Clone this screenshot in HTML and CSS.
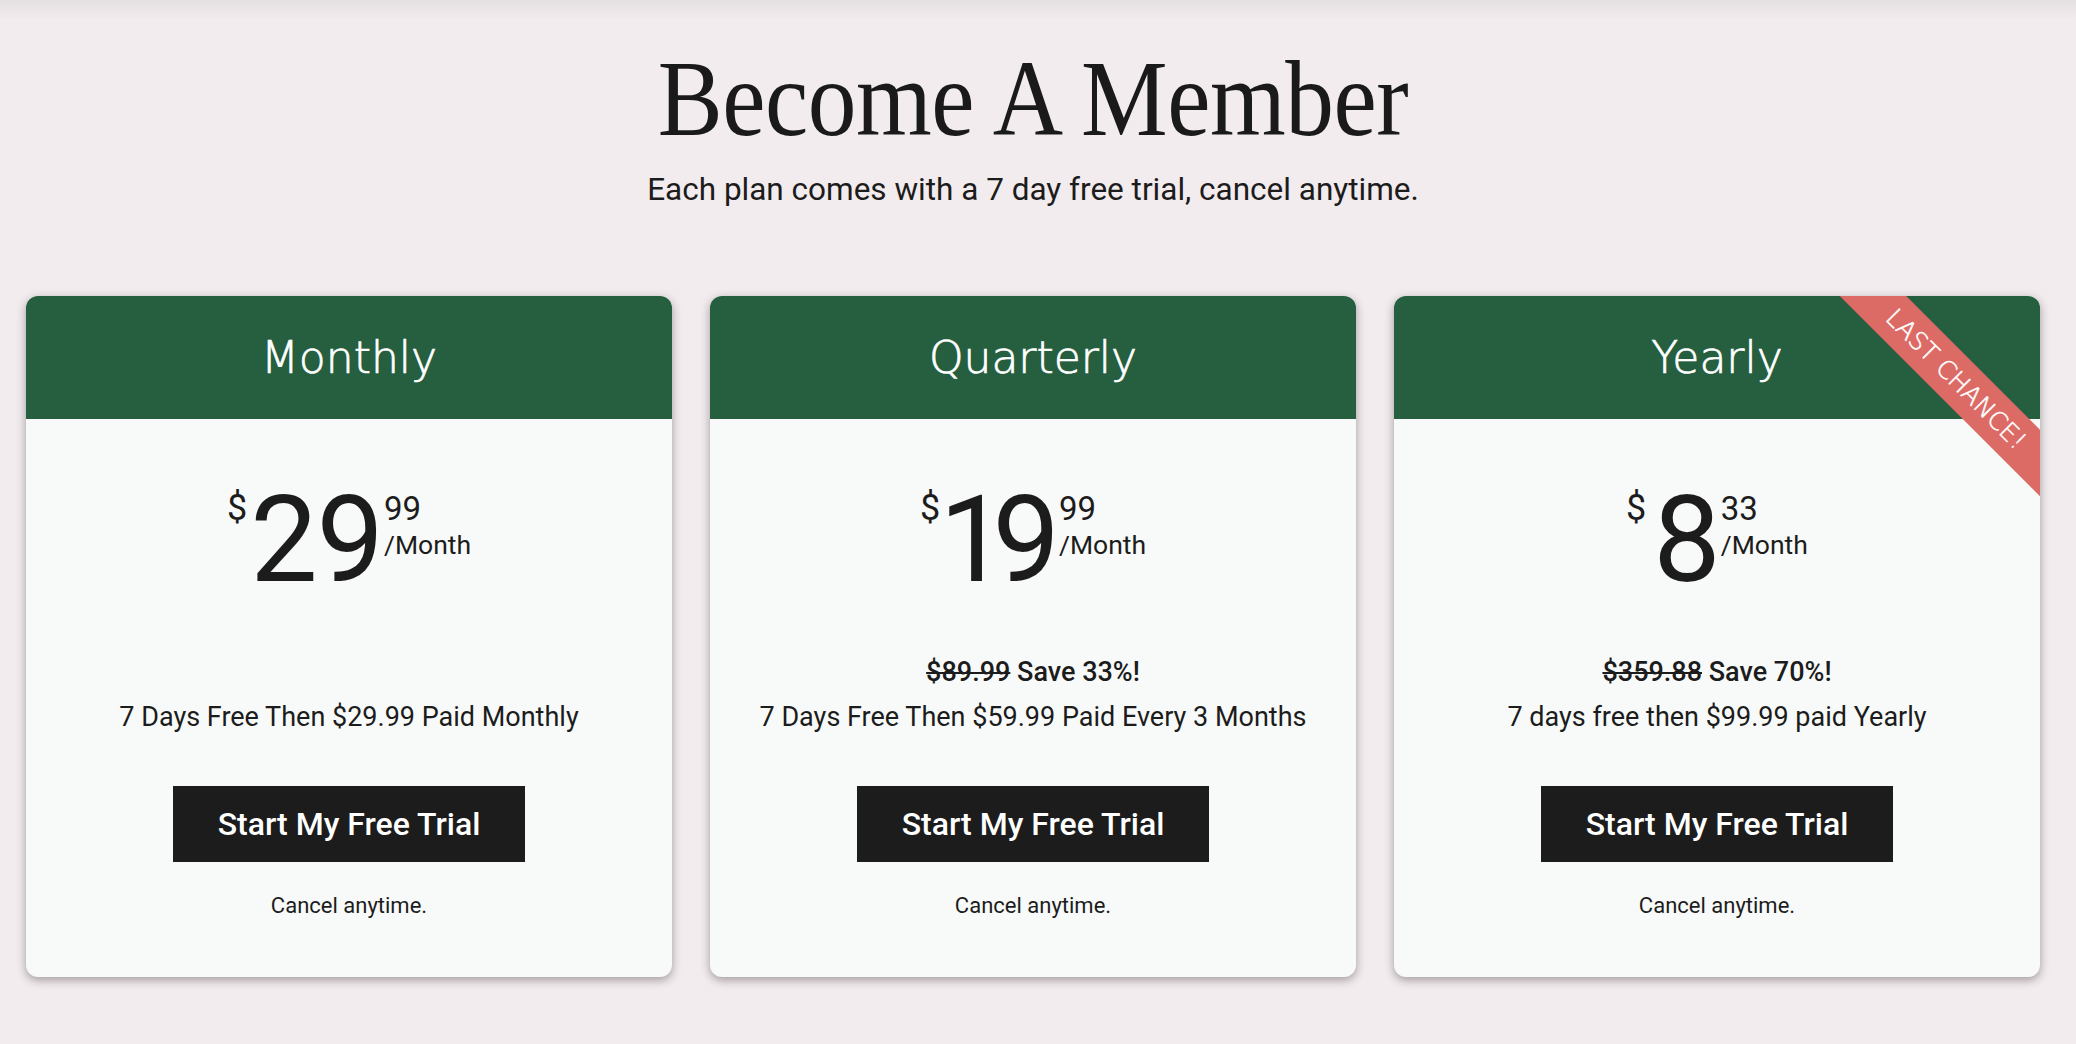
FILE: index.html
```html
<!DOCTYPE html>
<html lang="en">
<head>
<meta charset="utf-8">
<title>Become A Member</title>
<link rel="stylesheet" href="styles.css">
</head>
<body>
<main class="page">
  <h1 class="title">Become A Member</h1>
  <p class="subtitle">Each plan comes with a 7 day free trial, cancel anytime.</p>

  <section class="plans">
    <article class="card">
      <header class="card-head"><h2 class="plan-name">Monthly</h2></header>
      <div class="card-body">
        <div class="price">
          <span class="currency">$</span>
          <span class="amount">29</span>
          <span class="cents-col">
            <span class="cents">99</span>
            <span class="per">/Month</span>
          </span>
        </div>
        <div class="savings"></div>
        <p class="terms">7 Days Free Then $29.99 Paid Monthly</p>
        <a class="cta" href="#">Start My Free Trial</a>
        <p class="cancel">Cancel anytime.</p>
      </div>
    </article>

    <article class="card">
      <header class="card-head"><h2 class="plan-name">Quarterly</h2></header>
      <div class="card-body">
        <div class="price">
          <span class="currency">$</span>
          <span class="amount amount-tight">19</span>
          <span class="cents-col">
            <span class="cents">99</span>
            <span class="per">/Month</span>
          </span>
        </div>
        <div class="savings"><s>$89.99</s> Save 33%!</div>
        <p class="terms">7 Days Free Then $59.99 Paid Every 3 Months</p>
        <a class="cta" href="#">Start My Free Trial</a>
        <p class="cancel">Cancel anytime.</p>
      </div>
    </article>

    <article class="card">
      <header class="card-head"><h2 class="plan-name">Yearly</h2></header>
      <div class="ribbon">LAST CHANCE!</div>
      <div class="card-body">
        <div class="price">
          <span class="currency">$</span>
          <span class="amount amount-single">8</span>
          <span class="cents-col">
            <span class="cents">33</span>
            <span class="per">/Month</span>
          </span>
        </div>
        <div class="savings"><s>$359.88</s> Save 70%!</div>
        <p class="terms">7 days free then $99.99 paid Yearly</p>
        <a class="cta" href="#">Start My Free Trial</a>
        <p class="cancel">Cancel anytime.</p>
      </div>
    </article>
  </section>
</main>
</body>
</html>
```

FILE: styles.css
```css
* { box-sizing: border-box; }

html, body {
  margin: 0;
  padding: 0;
}

body {
  background-color: #f2ecee;
  background-image: linear-gradient(to bottom, #e4dfe0 0px, #f2ecee 20px);
  background-repeat: no-repeat;
  min-height: 1044px;
  color: #1c1c1c;
  font-family: Roboto, "Liberation Sans", Arial, sans-serif;
}

.page {
  padding: 46px 36px 0 26px;
}

.title {
  margin: 0;
  text-align: center;
  font-family: "Liberation Serif", "Times New Roman", serif;
  font-weight: 400;
  font-size: 107px;
  line-height: 106px;
  letter-spacing: -0.5px;
  transform: scaleX(0.91);
  color: #1a1a1a;
}

.subtitle {
  margin: 20px 0 0;
  text-align: center;
  font-size: 31.5px;
  line-height: 36px;
  color: #1c1c1c;
}

.plans {
  margin-top: 88px;
  display: grid;
  grid-template-columns: repeat(3, 646px);
  column-gap: 38px;
}

.card {
  position: relative;
  overflow: hidden;
  border-radius: 12px;
  background: #f8faf9;
  box-shadow: 0 3px 10px rgba(40, 30, 35, 0.4);
}

.card-head {
  height: 123px;
  background: #265e40;
  display: flex;
  align-items: center;
  justify-content: center;
}

.plan-name {
  margin: 0;
  font-family: "DejaVu Sans", Lato, sans-serif;
  font-weight: 200;
  font-size: 44px;
  line-height: normal;
  color: #ffffff;
  -webkit-text-stroke: 0.7px #ffffff;
}

.ribbon {
  position: absolute;
  top: 83px;
  right: 84px;
  width: 340px;
  height: 47px;
  transform: translate(50%, -50%) rotate(45deg);
  background: #dc6b66;
  color: #ffffff;
  font-family: "DejaVu Sans", Lato, sans-serif;
  font-weight: 200;
  font-size: 25px;
  line-height: 47px;
  text-align: center;
  -webkit-text-stroke: 0.5px #ffffff;
}

.card-body {
  padding: 61px 0 56px;
  display: flex;
  flex-direction: column;
  align-items: center;
}

.price {
  display: flex;
  align-items: flex-start;
  justify-content: center;
  height: 120px;
}

.currency {
  margin-top: 10px;
  margin-right: 3px;
  font-size: 36px;
  line-height: 36px;
}

.amount {
  font-size: 120px;
  line-height: 120px;
  letter-spacing: -1px;
}

.amount-tight {
  letter-spacing: -14px;
  margin-left: -4px;
  margin-right: 12px;
}

.amount-single {
  margin-left: 4px;
}

.cents-col {
  display: flex;
  flex-direction: column;
  margin-top: 12px;
  margin-left: 1px;
}

.cents {
  font-size: 33px;
  line-height: 33px;
}

.per {
  margin-top: 7px;
  font-size: 26.5px;
  line-height: 26.5px;
}

.savings {
  margin-top: 50px;
  height: 45px;
  font-size: 27px;
  line-height: 45px;
  font-weight: 500;
  text-align: center;
}

.savings s {
  text-decoration-thickness: 2px;
}

.terms {
  margin: 0;
  font-size: 27px;
  line-height: 45px;
  text-align: center;
}

.cta {
  margin-top: 46px;
  width: 352px;
  height: 76px;
  display: flex;
  align-items: center;
  justify-content: center;
  background: #1c1c1c;
  color: #ffffff;
  font-size: 32px;
  font-weight: 500;
  text-decoration: none;
}

.cancel {
  margin: 29px 0 0;
  font-size: 22px;
  line-height: 30px;
  text-align: center;
}
```
